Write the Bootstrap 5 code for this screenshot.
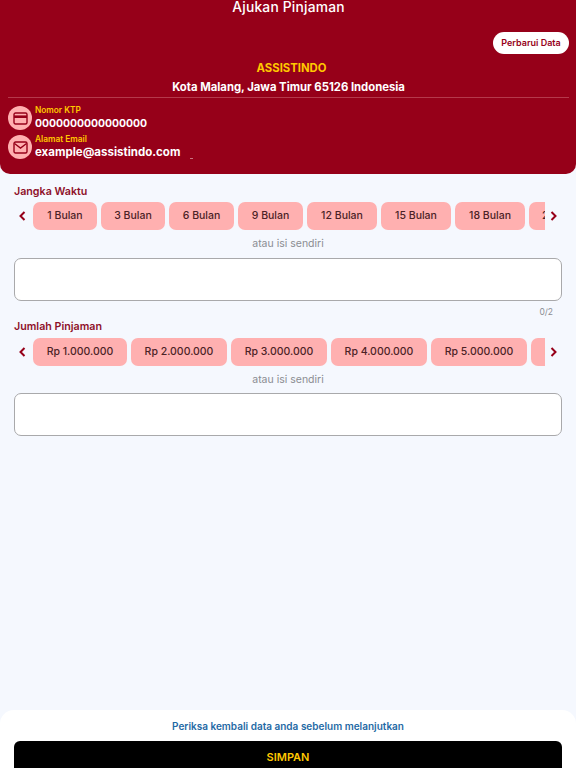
<!DOCTYPE html>
<html lang="id">
<head>
  <meta charset="UTF-8">
  <title>Ajukan Pinjaman</title>
  <meta name="viewport" content="width=device-width, initial-scale=1">
  <link href="https://cdn.jsdelivr.net/npm/bootstrap@5.3.0/dist/css/bootstrap.min.css" rel="stylesheet">
  <style>
    body {
      background-color: #f5f8fe;
      font-family: "Inter", "Liberation Sans", sans-serif;
    }
    .page-wrap { height: 768px; }
    .top-panel {
      background-color: #960019;
      height: 174px;
      border-radius: 0 0 10px 10px;
      padding: 0 7px 0 8px;
      flex-shrink: 0;
    }
    .page-title {
      color: #fff;
      font-size: 13.8px;
      font-weight: 500;
      line-height: 14px;
      letter-spacing: .2px;
    }
    .update-btn {
      background-color: #fff;
      color: #960019;
      font-size: 9px;
      font-weight: 600;
      line-height: 22px;
      height: 22px;
      width: 76px;
      border-radius: 11px;
      padding: 0;
      border: 0;
      margin-top: 18px;
    }
    .company-name {
      color: #ffc800;
      font-size: 11.3px;
      font-weight: 700;
      line-height: 16px;
      margin-top: 6px;
      padding-left: 6px;
    }
    .company-addr {
      color: #fff;
      font-size: 11.3px;
      font-weight: 700;
      line-height: 16px;
      margin-top: 3px;
    }
    .top-rule {
      height: 1px;
      background-color: #b5394b;
      margin-top: 2px;
    }
    .info-row { height: 24px; gap: 3px; }
    .info-row + .info-row { margin-top: 5px; }
    .info-circle {
      width: 24px;
      height: 24px;
      border-radius: 50%;
      background-color: #ffb0b0;
      flex-shrink: 0;
    }
    .info-label {
      color: #ffc800;
      font-size: 8.3px;
      font-weight: 600;
      line-height: 11px;
    }
    .info-value {
      color: #fff;
      font-size: 11.5px;
      font-weight: 700;
      line-height: 15px;
    }
    .info-number { font-size: 10.4px; }
    .stray-mark {
      width: 3px;
      height: 1px;
      background-color: #c9727f;
      align-self: flex-end;
      margin-left: 7px;
    }
    .form-area { padding: 11px 14px 0; }
    .field-label {
      color: #8e1029;
      font-size: 10.7px;
      font-weight: 600;
      line-height: 14px;
    }
    .field-label-next { margin-top: 2px; }
    .chip-row { margin-top: 3px; height: 28px; }
    .chip-row-next { margin-top: 4px; }
    .arrow-box { width: 19px; flex-shrink: 0; }
    .arrow-box svg { display: block; }
    .chip-track { width: 512px; gap: 4px; flex-shrink: 0; }
    .chip-item {
      background-color: #ffb0b0;
      color: #4b2226;
      font-size: 10.5px;
      font-weight: 500;
      line-height: 28px;
      height: 28px;
      border-radius: 7px;
      text-align: center;
      flex-shrink: 0;
      white-space: nowrap;
      overflow: hidden;
    }
    .w-64 { width: 64px; }
    .w-65 { width: 65px; }
    .w-70 { width: 70px; }
    .w-94 { width: 94px; }
    .w-96 { width: 96px; }
    .hint-text {
      color: #8b8d92;
      font-size: 10.5px;
      line-height: 14px;
      margin-top: 7px;
    }
    .amount-input {
      height: 43px;
      border: 1.5px solid #a9a9ab;
      border-radius: 7px;
      background-color: #fff;
      margin-top: 7px;
    }
    .amount-input-next { margin-top: 6px; }
    .count-text {
      color: #8b8d92;
      font-size: 8.5px;
      line-height: 12px;
      margin-top: 5px;
      padding-right: 9px;
    }
    .bottom-panel {
      background-color: #fff;
      height: 58px;
      border-radius: 14px 14px 0 0;
      padding: 10px 14px 0;
      flex-shrink: 0;
    }
    .check-text {
      color: #1f6aa5;
      font-size: 10px;
      font-weight: 600;
      line-height: 13px;
    }
    .save-btn {
      background-color: #000;
      color: #ffc800;
      font-size: 11px;
      font-weight: 600;
      height: 32px;
      line-height: 32px;
      border: 0;
      border-radius: 6px;
      padding: 0;
      margin-top: 8px;
    }
  </style>
</head>
<body>
<div class="page-wrap d-flex flex-column overflow-hidden">
  <div class="top-panel">
    <div class="page-title text-center">Ajukan Pinjaman</div>
    <div class="text-end"><button class="btn update-btn">Perbarui Data</button></div>
    <div class="company-name text-center">ASSISTINDO</div>
    <div class="company-addr text-center">Kota Malang, Jawa Timur 65126 Indonesia</div>
    <div class="top-rule"></div>
    <div class="info-row d-flex align-items-center mt-2">
      <div class="info-circle d-flex align-items-center justify-content-center">
        <svg width="15" height="13" viewBox="0 0 15 13" fill="none">
          <rect x="1" y="1" width="13" height="11" rx="1.5" stroke="#960019" stroke-width="1.4"/>
          <rect x="1" y="3.4" width="13" height="2.6" fill="#960019"/>
        </svg>
      </div>
      <div>
        <div class="info-label">Nomor KTP</div>
        <div class="info-value info-number">0000000000000000</div>
      </div>
    </div>
    <div class="info-row d-flex align-items-center">
      <div class="info-circle d-flex align-items-center justify-content-center">
        <svg width="15" height="13" viewBox="0 0 15 13" fill="none">
          <rect x="1" y="1" width="13" height="11" rx="1.5" stroke="#960019" stroke-width="1.4"/>
          <path d="M1.5 2.5 7.5 7 13.5 2.5" stroke="#960019" stroke-width="1.4"/>
        </svg>
      </div>
      <div>
        <div class="info-label">Alamat Email</div>
        <div class="info-value">example@assistindo.com</div>
      </div>
      <div class="stray-mark"></div>
    </div>
  </div>

  <div class="form-area flex-grow-1">
    <div class="field-label">Jangka Waktu</div>
    <div class="chip-row d-flex align-items-center">
      <div class="arrow-box">
        <svg width="17" height="12" viewBox="0 0 17 12" fill="none"><path d="M10.5 2 6.5 6l4 4" stroke="#960019" stroke-width="2"/></svg>
      </div>
      <div class="chip-track d-flex overflow-hidden">
        <div class="chip-item w-64">1 Bulan</div>
        <div class="chip-item w-64">3 Bulan</div>
        <div class="chip-item w-65">6 Bulan</div>
        <div class="chip-item w-65">9 Bulan</div>
        <div class="chip-item w-70">12 Bulan</div>
        <div class="chip-item w-70">15 Bulan</div>
        <div class="chip-item w-70">18 Bulan</div>
        <div class="chip-item w-70">24 Bulan</div>
      </div>
      <div class="arrow-box">
        <svg width="17" height="12" viewBox="0 0 17 12" fill="none"><path d="M6.5 2l4 4-4 4" stroke="#960019" stroke-width="2"/></svg>
      </div>
    </div>
    <div class="hint-text text-center">atau isi sendiri</div>
    <div class="amount-input"></div>
    <div class="count-text text-end">0/2</div>

    <div class="field-label field-label-next">Jumlah Pinjaman</div>
    <div class="chip-row chip-row-next d-flex align-items-center">
      <div class="arrow-box">
        <svg width="17" height="12" viewBox="0 0 17 12" fill="none"><path d="M10.5 2 6.5 6l4 4" stroke="#960019" stroke-width="2"/></svg>
      </div>
      <div class="chip-track d-flex overflow-hidden">
        <div class="chip-item w-94">Rp 1.000.000</div>
        <div class="chip-item w-96">Rp 2.000.000</div>
        <div class="chip-item w-96">Rp 3.000.000</div>
        <div class="chip-item w-96">Rp 4.000.000</div>
        <div class="chip-item w-96">Rp 5.000.000</div>
        <div class="chip-item w-96">Rp 6.000.000</div>
      </div>
      <div class="arrow-box">
        <svg width="17" height="12" viewBox="0 0 17 12" fill="none"><path d="M6.5 2l4 4-4 4" stroke="#960019" stroke-width="2"/></svg>
      </div>
    </div>
    <div class="hint-text text-center">atau isi sendiri</div>
    <div class="amount-input amount-input-next"></div>
  </div>

  <div class="bottom-panel">
    <div class="check-text text-center">Periksa kembali data anda sebelum melanjutkan</div>
    <button class="btn save-btn w-100">SIMPAN</button>
  </div>
</div>
<script src="https://cdn.jsdelivr.net/npm/bootstrap@5.3.0/dist/js/bootstrap.bundle.min.js"></script>
</body>
</html>
